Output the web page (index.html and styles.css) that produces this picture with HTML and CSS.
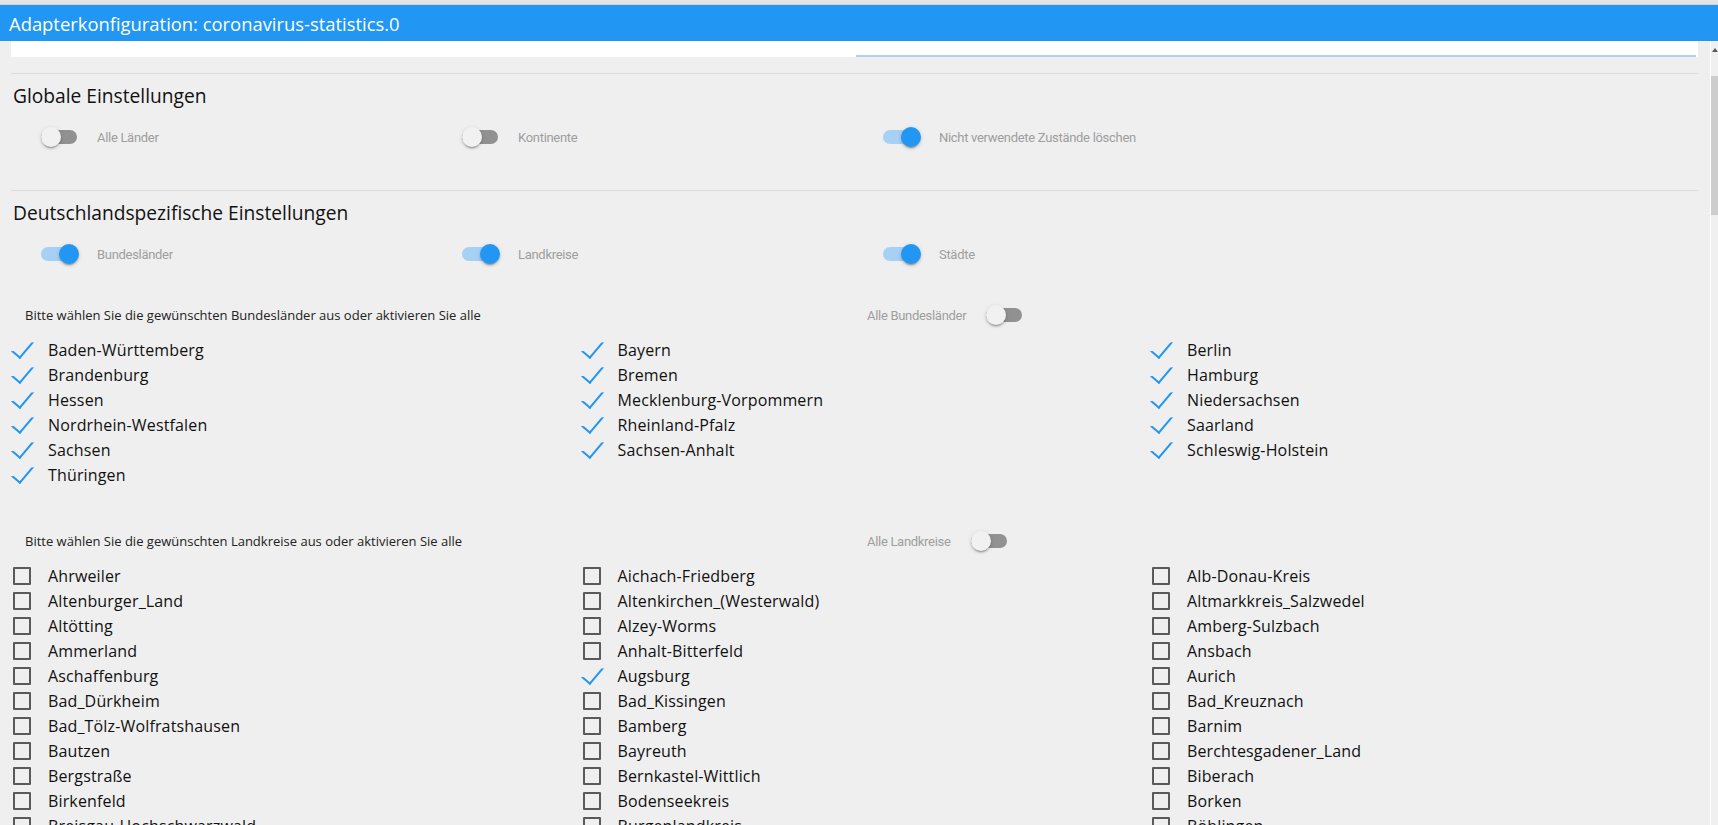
FILE: index.html
```html
<!DOCTYPE html>
<html lang="de">
<head>
<meta charset="utf-8">
<title>Adapterkonfiguration: coronavirus-statistics.0</title>
<link rel="stylesheet" href="styles.css">
</head>
<body>
<div class="topstrip"></div>
<header class="titlebar">Adapterkonfiguration: coronavirus-statistics.0</header>
<div class="main">
  <div class="content">
    <div class="tabstrip"><span class="tab-indicator"></span></div>

    <section class="section section-global">
      <h2 class="heading">Globale Einstellungen</h2>
      <div class="grid4 toggle-row">
        <div class="cell"><span class="lever"></span><span class="switch-label after">Alle Länder</span></div>
        <div class="cell"><span class="lever"></span><span class="switch-label after">Kontinente</span></div>
        <div class="cell"><span class="lever on"></span><span class="switch-label after">Nicht verwendete Zustände löschen</span></div>
      </div>
    </section>

    <section class="section section-de">
      <h2 class="heading">Deutschlandspezifische Einstellungen</h2>
      <div class="grid4 toggle-row">
        <div class="cell"><span class="lever on"></span><span class="switch-label after">Bundesländer</span></div>
        <div class="cell"><span class="lever on"></span><span class="switch-label after">Landkreise</span></div>
        <div class="cell"><span class="lever on"></span><span class="switch-label after">Städte</span></div>
      </div>

      <div class="grid4 sub-row sub-first">
        <div class="subtext">Bitte wählen Sie die gewünschten Bundesländer aus oder aktivieren Sie alle</div>
        <div class="cell"><span class="switch-label before">Alle Bundesländer</span><span class="lever"></span></div>
      </div>
      <div class="list">
        <span class="cb checked">Baden-Württemberg</span>
        <span class="cb checked">Bayern</span>
        <span class="cb checked">Berlin</span>
        <span class="cb checked">Brandenburg</span>
        <span class="cb checked">Bremen</span>
        <span class="cb checked">Hamburg</span>
        <span class="cb checked">Hessen</span>
        <span class="cb checked">Mecklenburg-Vorpommern</span>
        <span class="cb checked">Niedersachsen</span>
        <span class="cb checked">Nordrhein-Westfalen</span>
        <span class="cb checked">Rheinland-Pfalz</span>
        <span class="cb checked">Saarland</span>
        <span class="cb checked">Sachsen</span>
        <span class="cb checked">Sachsen-Anhalt</span>
        <span class="cb checked">Schleswig-Holstein</span>
        <span class="cb checked">Thüringen</span>
      </div>

      <div class="grid4 sub-row sub-second">
        <div class="subtext">Bitte wählen Sie die gewünschten Landkreise aus oder aktivieren Sie alle</div>
        <div class="cell"><span class="switch-label before">Alle Landkreise</span><span class="lever"></span></div>
      </div>
      <div class="list">
        <span class="cb">Ahrweiler</span>
        <span class="cb">Aichach-Friedberg</span>
        <span class="cb">Alb-Donau-Kreis</span>
        <span class="cb">Altenburger_Land</span>
        <span class="cb">Altenkirchen_(Westerwald)</span>
        <span class="cb">Altmarkkreis_Salzwedel</span>
        <span class="cb">Altötting</span>
        <span class="cb">Alzey-Worms</span>
        <span class="cb">Amberg-Sulzbach</span>
        <span class="cb">Ammerland</span>
        <span class="cb">Anhalt-Bitterfeld</span>
        <span class="cb">Ansbach</span>
        <span class="cb">Aschaffenburg</span>
        <span class="cb checked">Augsburg</span>
        <span class="cb">Aurich</span>
        <span class="cb">Bad_Dürkheim</span>
        <span class="cb">Bad_Kissingen</span>
        <span class="cb">Bad_Kreuznach</span>
        <span class="cb">Bad_Tölz-Wolfratshausen</span>
        <span class="cb">Bamberg</span>
        <span class="cb">Barnim</span>
        <span class="cb">Bautzen</span>
        <span class="cb">Bayreuth</span>
        <span class="cb">Berchtesgadener_Land</span>
        <span class="cb">Bergstraße</span>
        <span class="cb">Bernkastel-Wittlich</span>
        <span class="cb">Biberach</span>
        <span class="cb">Birkenfeld</span>
        <span class="cb">Bodenseekreis</span>
        <span class="cb">Borken</span>
        <span class="cb">Breisgau-Hochschwarzwald</span>
        <span class="cb">Burgenlandkreis</span>
        <span class="cb">Böblingen</span>
      </div>
    </section>
  </div>
  <div class="scrollbar">
    <span class="scroll-arrow"></span>
    <span class="scroll-thumb"></span>
  </div>
</div>
</body>
</html>
```
FILE: styles.css
```css
*,
*::before,
*::after {
  box-sizing: border-box;
}

html,
body {
  margin: 0;
  padding: 0;
}

body {
  height: 825px;
  overflow: hidden;
  background: #efefef;
  font-family: "Open Sans", "Noto Sans", sans-serif;
  color: #111;
}

.topstrip {
  height: 5px;
  background: #e3e3e3;
  border-bottom: 1px solid #d4d4d4;
}

.titlebar {
  height: 36px;
  padding: 2px 0 0 9px;
  background: #2196f3;
  color: #fff;
  font-size: 18.4px;
  line-height: 34px;
  white-space: nowrap;
}

.main {
  display: flex;
  height: 784px;
  overflow: hidden;
}

.content {
  flex: none;
  width: 1687px;
  margin-left: 11px;
}

.tabstrip {
  display: flex;
  align-items: flex-end;
  height: 16px;
  background: #fff;
}

.tab-indicator {
  width: 840px;
  height: 2px;
  margin-left: 845px;
  background: #a9d3f6;
}

.section {
  border-top: 1px solid #dcdcdc;
}

.section-global {
  margin-top: 16px;
  padding-bottom: 38px;
}

.heading {
  margin: 0;
  padding: 9px 0 0 2px;
  font-size: 19.2px;
  font-weight: 400;
  line-height: 26px;
  color: #111;
}

.grid4 {
  display: grid;
  grid-template-columns: repeat(4, 421px);
  align-items: center;
  height: 30px;
  padding-left: 2px;
}

.toggle-row {
  margin-top: 13px;
}

.sub-first {
  margin-top: 31px;
}

.sub-second {
  margin-top: 38px;
}

.cell {
  display: flex;
  align-items: center;
  padding-left: 12px;
}

.lever {
  position: relative;
  flex: none;
  width: 36px;
  height: 14px;
  margin: 0 16px;
  border-radius: 15px;
  background: #919191;
}

.lever::after {
  content: "";
  position: absolute;
  top: -3px;
  left: 0;
  width: 20px;
  height: 20px;
  border-radius: 50%;
  background: #f1f1f1;
  box-shadow: 0 3px 1px -2px rgba(0, 0, 0, 0.2), 0 2px 2px 0 rgba(0, 0, 0, 0.14), 0 1px 5px 0 rgba(0, 0, 0, 0.12);
}

.lever.on {
  background: #a6d0f4;
}

.lever.on::after {
  left: 18px;
  background: #2196f3;
}

.switch-label {
  font-family: Roboto, "Open Sans", sans-serif;
  font-size: 13px;
  letter-spacing: -0.3px;
  color: #9e9e9e;
  white-space: nowrap;
}

.switch-label.after {
  margin-left: 4px;
}

.switch-label.before {
  margin-right: 4px;
}

.subtext {
  grid-column: 1 / span 2;
  padding-left: 12px;
  font-size: 13px;
  color: #222;
  white-space: nowrap;
}

.list {
  display: grid;
  grid-template-columns: 569.5px 569.5px 1fr;
  margin-top: 8px;
  padding-left: 2px;
}

.cb {
  position: relative;
  display: block;
  height: 25px;
  padding-left: 35px;
  font-size: 16px;
  letter-spacing: 0.15px;
  line-height: 25px;
  color: #111;
  white-space: nowrap;
}

.cb::before {
  content: "";
  position: absolute;
  top: 0;
  left: 0;
  width: 18px;
  height: 18px;
  margin-top: 3px;
  border: 2px solid #5a5a5a;
  border-radius: 1px;
}

.cb.checked::before {
  top: -4px;
  left: -5px;
  width: 12px;
  height: 22px;
  border-radius: 0;
  border-top-color: transparent;
  border-left-color: transparent;
  border-right-color: #2196f3;
  border-bottom-color: #2196f3;
  transform: rotate(40deg);
  transform-origin: 100% 100%;
}

.scrollbar {
  display: flex;
  flex-direction: column;
  align-items: center;
  flex: none;
  width: 8px;
  margin-left: 12px;
  border-left: 1px solid #fff;
  background: #f0f0f0;
}

.scroll-arrow {
  width: 0;
  height: 0;
  margin-top: 7px;
  border-left: 3px solid transparent;
  border-right: 3px solid transparent;
  border-bottom: 4px solid #5a5a5a;
}

.scroll-thumb {
  align-self: stretch;
  height: 139px;
  margin-top: 24px;
  background: #cdcdcd;
}
```
